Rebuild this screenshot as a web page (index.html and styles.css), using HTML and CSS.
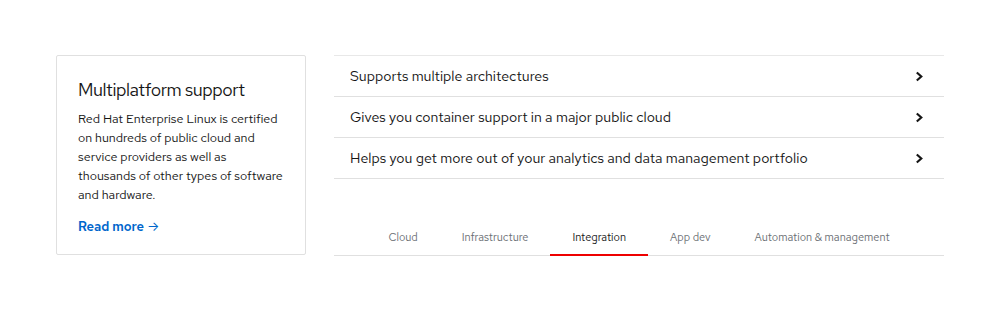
FILE: index.html
```html
<!DOCTYPE html>
<html lang="en">
<head>
  <meta charset="UTF-8">
  <meta name="viewport" content="width=device-width,initial-scale=1.0">
  <title>Multiplatform support</title>
  <link rel="stylesheet" href="styles.css">
</head>
<body>
  <div class="section">
    <div class="card">
      <h3 class="card-title">Multiplatform support</h3>
      <p class="card-text">Red Hat Enterprise Linux is certified on hundreds of public cloud and service providers as well as thousands of other types of software and hardware.</p>
      <a class="read-more" href="#">Read more <span class="arrow">&rarr;</span></a>
    </div>

    <div class="panel">
      <ul class="topics">
        <li class="topic">
          <span>Supports multiple architectures</span>
          <svg class="chevron" viewBox="0 0 10 12" width="9" height="11"><path d="M2 1.5 L7 6 L2 10.5" fill="none" stroke="#151515" stroke-width="2.4"/></svg>
        </li>
        <li class="topic">
          <span>Gives you container support in a major public cloud</span>
          <svg class="chevron" viewBox="0 0 10 12" width="9" height="11"><path d="M2 1.5 L7 6 L2 10.5" fill="none" stroke="#151515" stroke-width="2.4"/></svg>
        </li>
        <li class="topic">
          <span>Helps you get more out of your analytics and data management portfolio</span>
          <svg class="chevron" viewBox="0 0 10 12" width="9" height="11"><path d="M2 1.5 L7 6 L2 10.5" fill="none" stroke="#151515" stroke-width="2.4"/></svg>
        </li>
      </ul>

      <div class="tabs">
        <a class="tab" href="#">Cloud</a>
        <a class="tab" href="#">Infrastructure</a>
        <a class="tab active" href="#">Integration</a>
        <a class="tab" href="#">App dev</a>
        <a class="tab" href="#">Automation &amp; management</a>
      </div>
    </div>
  </div>
</body>
</html>
```

FILE: styles.css
```css
body {
  margin: 0;
  background: #fff;
  color: #151515;
  font-family: "Red Hat Text", Inter, "Noto Sans", sans-serif;
}
.section {
  display: flex;
  gap: 28px;
  padding: 55px 56px 0 56px;
}
.card {
  width: 250px;
  height: 200px;
  box-sizing: border-box;
  border: 1px solid #e0e0e0;
  border-radius: 2px;
  padding: 22px 21px;
}
.card-title {
  margin: 0 0 7px 0;
  font-size: 18px;
  font-weight: 400;
  line-height: 24px;
  letter-spacing: -0.45px;
}
.card-text {
  margin: 0 0 11px 0;
  font-size: 12.5px;
  line-height: 19px;
  color: #151515;
}
.read-more {
  color: #0066cc;
  font-size: 13px;
  font-weight: 600;
  text-decoration: none;
}
.arrow {
  font-weight: 400;
}
.panel {
  width: 610px;
}
.topics {
  list-style: none;
  margin: 0;
  padding: 0;
  border-top: 1px solid #e8e8e8;
}
.topic {
  display: flex;
  justify-content: space-between;
  align-items: center;
  height: 40px;
  padding: 0 20px 0 16px;
  border-bottom: 1px solid #e0e0e0;
  font-size: 14.2px;
}
.tabs {
  display: flex;
  justify-content: center;
  margin-top: 40px;
  border-bottom: 1px solid #e0e0e0;
}
.tab {
  padding: 11px 22px 10px 22px;
  font-size: 11px;
  color: #6a6e73;
  text-decoration: none;
  border-bottom: 2px solid transparent;
  margin-bottom: -1px;
}
.tab.active {
  color: #151515;
  border-bottom-color: #ee0000;
}
```
